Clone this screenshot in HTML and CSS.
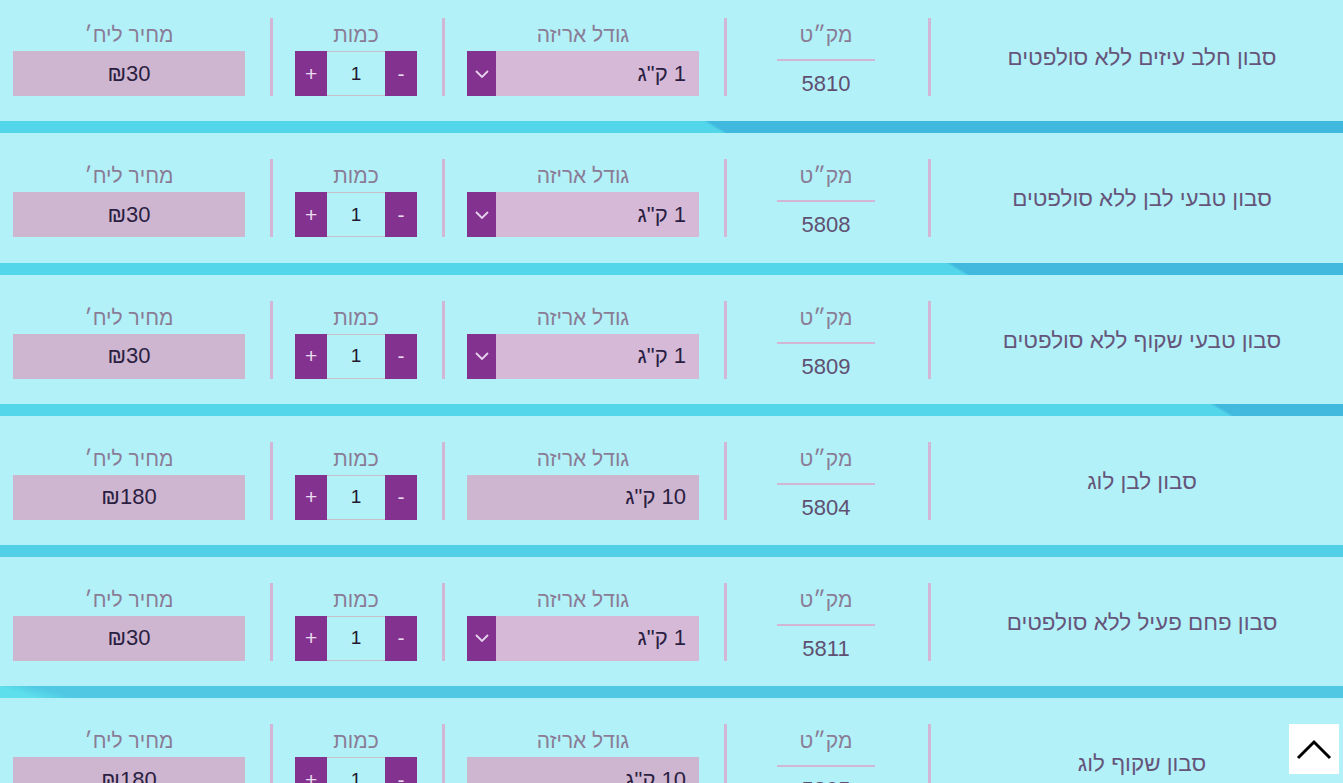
FILE: index.html
```html
<!DOCTYPE html>
<html lang="he" dir="rtl">
<head>
<meta charset="utf-8">
<title>מוצרים</title>
<link rel="stylesheet" href="styles.css">
</head>
<body>
<main class="list">

  <section class="product">
    <div class="cell name">סבון חלב עיזים ללא סולפטים</div>
    <div class="cell sku"><div class="label">מק״ט</div><div class="rule"></div><div class="num">5810</div></div>
    <div class="cell size"><div class="label">גודל אריזה</div>
      <div class="select"><span class="sel-text">1 ק"ג</span><span class="arrow"><svg width="14" height="8" viewBox="0 0 14 8"><path d="M1 1 L7 7 L13 1" fill="none" stroke="#e6d4ee" stroke-width="1.8"/></svg></span></div></div>
    <div class="cell qty"><div class="label">כמות</div>
      <div class="stepper"><span class="step">-</span><span class="qval">1</span><span class="step">+</span></div></div>
    <div class="cell price"><div class="label">מחיר ליח׳</div><div class="pricebox">₪30</div></div>
  </section>
  <div class="bar bar-1"></div>

  <section class="product">
    <div class="cell name">סבון טבעי לבן ללא סולפטים</div>
    <div class="cell sku"><div class="label">מק״ט</div><div class="rule"></div><div class="num">5808</div></div>
    <div class="cell size"><div class="label">גודל אריזה</div>
      <div class="select"><span class="sel-text">1 ק"ג</span><span class="arrow"><svg width="14" height="8" viewBox="0 0 14 8"><path d="M1 1 L7 7 L13 1" fill="none" stroke="#e6d4ee" stroke-width="1.8"/></svg></span></div></div>
    <div class="cell qty"><div class="label">כמות</div>
      <div class="stepper"><span class="step">-</span><span class="qval">1</span><span class="step">+</span></div></div>
    <div class="cell price"><div class="label">מחיר ליח׳</div><div class="pricebox">₪30</div></div>
  </section>
  <div class="bar bar-2"></div>

  <section class="product">
    <div class="cell name">סבון טבעי שקוף ללא סולפטים</div>
    <div class="cell sku"><div class="label">מק״ט</div><div class="rule"></div><div class="num">5809</div></div>
    <div class="cell size"><div class="label">גודל אריזה</div>
      <div class="select"><span class="sel-text">1 ק"ג</span><span class="arrow"><svg width="14" height="8" viewBox="0 0 14 8"><path d="M1 1 L7 7 L13 1" fill="none" stroke="#e6d4ee" stroke-width="1.8"/></svg></span></div></div>
    <div class="cell qty"><div class="label">כמות</div>
      <div class="stepper"><span class="step">-</span><span class="qval">1</span><span class="step">+</span></div></div>
    <div class="cell price"><div class="label">מחיר ליח׳</div><div class="pricebox">₪30</div></div>
  </section>
  <div class="bar bar-3"></div>

  <section class="product">
    <div class="cell name">סבון לבן לוג</div>
    <div class="cell sku"><div class="label">מק״ט</div><div class="rule"></div><div class="num">5804</div></div>
    <div class="cell size"><div class="label">גודל אריזה</div>
      <div class="select plain"><span class="sel-text">10 ק"ג</span></div></div>
    <div class="cell qty"><div class="label">כמות</div>
      <div class="stepper"><span class="step">-</span><span class="qval">1</span><span class="step">+</span></div></div>
    <div class="cell price"><div class="label">מחיר ליח׳</div><div class="pricebox">₪180</div></div>
  </section>
  <div class="bar bar-4"></div>

  <section class="product">
    <div class="cell name">סבון פחם פעיל ללא סולפטים</div>
    <div class="cell sku"><div class="label">מק״ט</div><div class="rule"></div><div class="num">5811</div></div>
    <div class="cell size"><div class="label">גודל אריזה</div>
      <div class="select"><span class="sel-text">1 ק"ג</span><span class="arrow"><svg width="14" height="8" viewBox="0 0 14 8"><path d="M1 1 L7 7 L13 1" fill="none" stroke="#e6d4ee" stroke-width="1.8"/></svg></span></div></div>
    <div class="cell qty"><div class="label">כמות</div>
      <div class="stepper"><span class="step">-</span><span class="qval">1</span><span class="step">+</span></div></div>
    <div class="cell price"><div class="label">מחיר ליח׳</div><div class="pricebox">₪30</div></div>
  </section>
  <div class="bar bar-5"></div>

  <section class="product">
    <div class="cell name">סבון שקוף לוג</div>
    <div class="cell sku"><div class="label">מק״ט</div><div class="rule"></div><div class="num">5805</div></div>
    <div class="cell size"><div class="label">גודל אריזה</div>
      <div class="select plain"><span class="sel-text">10 ק"ג</span></div></div>
    <div class="cell qty"><div class="label">כמות</div>
      <div class="stepper"><span class="step">-</span><span class="qval">1</span><span class="step">+</span></div></div>
    <div class="cell price"><div class="label">מחיר ליח׳</div><div class="pricebox">₪180</div></div>
  </section>
  <div class="bar bar-4"></div>

</main>
<a class="to-top" href="#" aria-label="למעלה"><svg width="36" height="22" viewBox="0 0 36 22"><path d="M2 20 L18 4 L34 20" fill="none" stroke="#000" stroke-width="3"/></svg></a>
</body>
</html>
```
FILE: styles.css
```css
html, body {
  margin: 0;
  padding: 0;
  background: #b2f1f8;
  overflow: hidden;
  height: 783px;
}

body {
  font-family: "Liberation Sans", "DejaVu Sans", sans-serif;
}

.list {
  margin-top: -7.8px;
}

.product {
  display: grid;
  grid-template-columns: 415px 204px 282px 172px 270px;
  padding: 26px 0 25.2px;
  height: 78px;
}

.cell {
  display: flex;
  flex-direction: column;
  border-left: 3px solid #d2b6d6;
  padding: 0 25px 0 22px;
  min-width: 0;
}

.cell.price {
  border-left: none;
  padding: 0 25px 0 13px;
}

.cell.name {
  justify-content: center;
  align-items: center;
  padding: 2px 12px 0 22px;
  font-size: 22.4px;
  color: #66557a;
}

.label {
  height: 33px;
  line-height: 33px;
  text-align: center;
  font-size: 21px;
  color: #8a7c96;
  white-space: nowrap;
}

.rule {
  width: 98px;
  height: 2px;
  background: #d2b6d6;
  margin: 8px auto 0;
}

.num {
  margin-top: 11px;
  line-height: 24px;
  text-align: center;
  font-size: 22px;
  color: #5f5072;
}

.select {
  height: 45px;
  display: flex;
  align-items: stretch;
  background: #d5b9d7;
}

.select.plain {
  background: #cfb6d0;
}

.sel-text {
  flex: 1;
  display: flex;
  align-items: center;
  padding-right: 13px;
  font-size: 22px;
  color: #2a1e42;
}

.arrow {
  width: 29px;
  background: #84328f;
  display: flex;
  align-items: center;
  justify-content: center;
}

.stepper {
  width: 122px;
  height: 45px;
  margin: 0 auto;
  display: flex;
  box-sizing: border-box;
}

.step {
  width: 32px;
  background: #84328f;
  color: #eadcf0;
  font-size: 21px;
  display: flex;
  align-items: center;
  justify-content: center;
}

.qval {
  flex: 1;
  border-top: 1px solid #c9c1c9;
  border-bottom: 1px solid #c9c1c9;
  display: flex;
  align-items: center;
  justify-content: center;
  font-size: 19px;
  color: #22182f;
}

.pricebox {
  height: 45px;
  background: #cfb6d0;
  display: flex;
  align-items: center;
  justify-content: center;
  font-size: 22px;
  color: #2a1e42;
}

.bar {
  height: 12px;
}

.bar-1 {
  background: linear-gradient(31deg, #53d6e9 372px, #41b9de 375px);
}

.bar-2 {
  background: linear-gradient(31deg, #53d6e9 497px, #41b9de 500px);
}

.bar-3 {
  background: linear-gradient(31deg, #53d6e9 633px, #41b9de 636px);
}

.bar-4 {
  background: #50cfe6;
}

.bar-5 {
  background: linear-gradient(17deg, #5de0ec 10px, #50c8e4 22px);
}

.to-top {
  position: fixed;
  right: 4px;
  bottom: 9px;
  width: 50px;
  height: 50px;
  background: #ffffff;
  display: flex;
  align-items: center;
  justify-content: center;
}
```
